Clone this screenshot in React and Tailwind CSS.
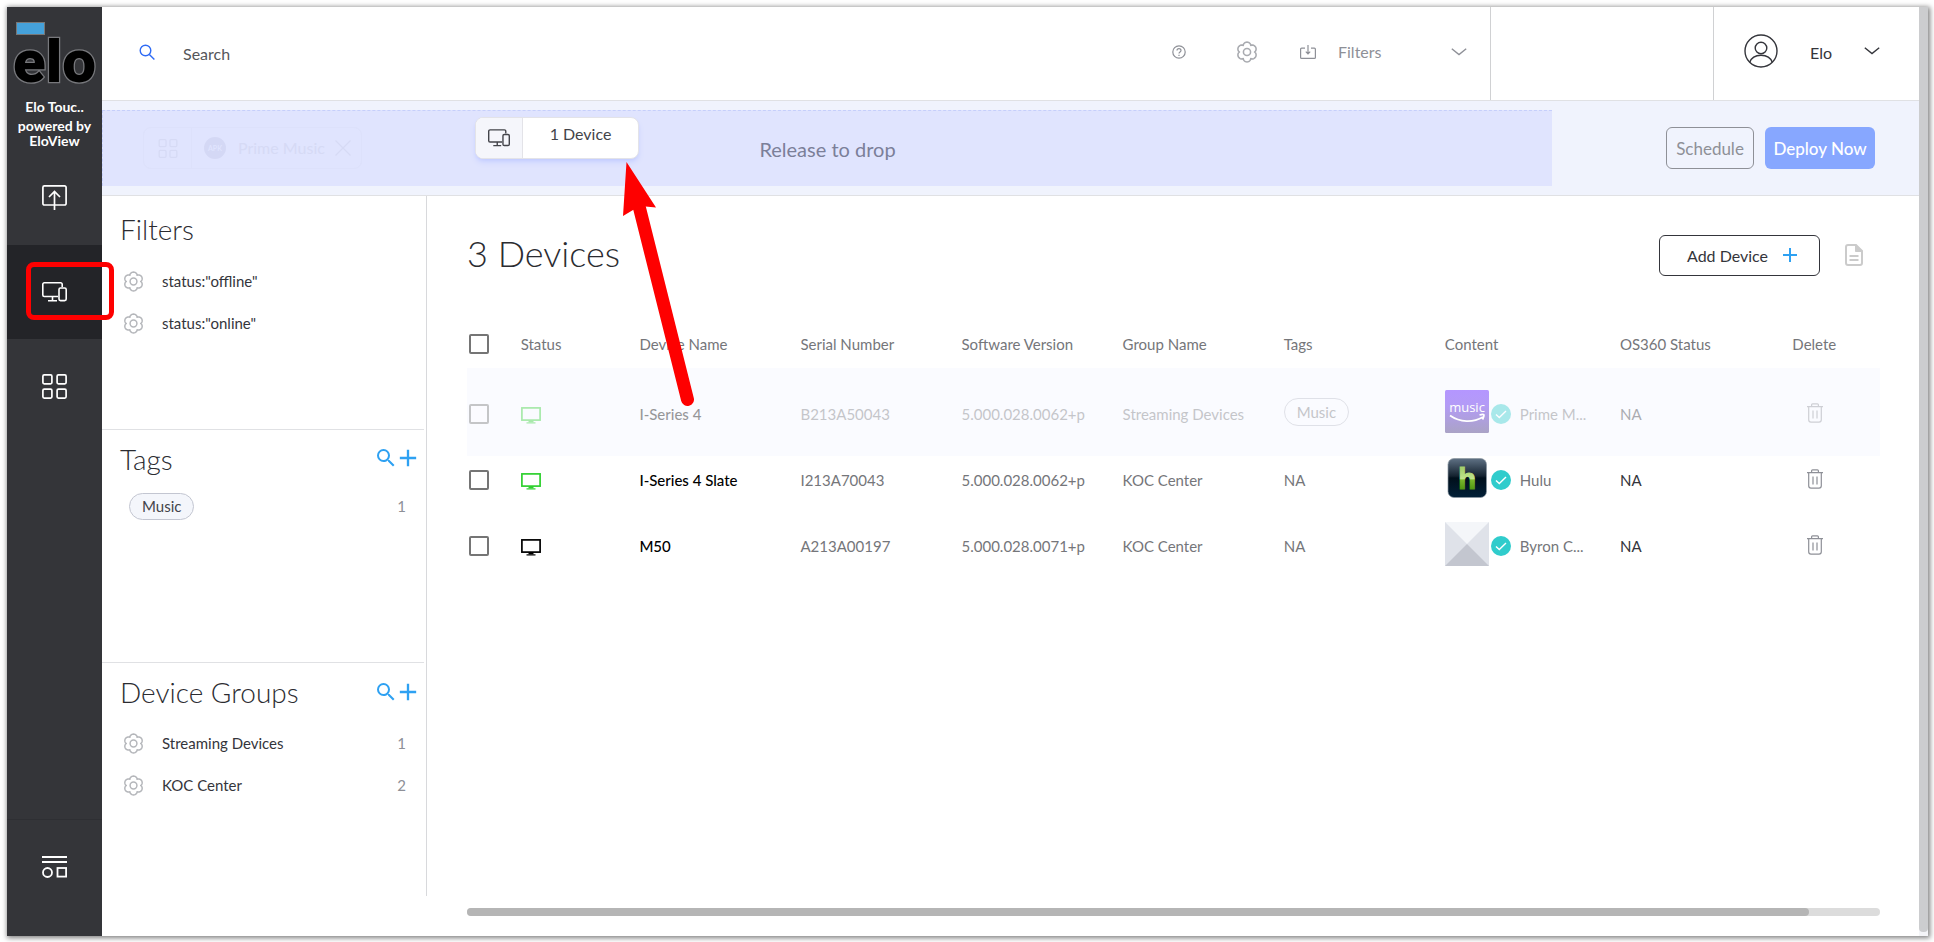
import { MdAdd, MdSearch } from 'react-icons/md'

// six rounded lobes with short notches between, one pointing up
const GEAR = Array.from({ length: 72 }, (_, i) => {
  const t = (i * Math.PI) / 36
  const r = 8.2 + 2.6 * Math.pow(Math.abs(Math.cos(3 * t)), 0.7)
  return `${(12 + r * Math.sin(t)).toFixed(2)},${(12 - r * Math.cos(t)).toFixed(2)}`
}).join(' ')

const DEVICES = [
  { name: 'I-Series 4', serial: 'B213A50043', version: '5.000.028.0062+p', group: 'Streaming Devices', tag: 'Music', app: 'music', content: 'Prime M...', status: 'text-[#2fd02f]', dragging: true },
  { name: 'I-Series 4 Slate', serial: 'I213A70043', version: '5.000.028.0062+p', group: 'KOC Center', app: 'hulu', content: 'Hulu', status: 'text-[#2fd02f]' },
  { name: 'M50', serial: 'A213A00197', version: '5.000.028.0071+p', group: 'KOC Center', app: 'none', content: 'Byron C...', status: 'text-black' },
]

const COLUMNS = ['Status', 'Device Name', 'Serial Number', 'Software Version', 'Group Name', 'Tags', 'Content', 'OS360 Status', 'Delete']

function GearIcon({ className }) {
  return (
    <svg viewBox="0 0 24 24" className={className} fill="none" stroke="currentColor" strokeWidth="1.7">
      <polygon points={GEAR} strokeLinejoin="round" />
      <circle cx="12" cy="12" r="3.9" />
    </svg>
  )
}

function DevicesIcon({ className }) {
  return (
    <svg viewBox="0 0 25 20" className={className} fill="none" stroke="currentColor" strokeWidth="1.6">
      <path d="M16 14.5H2.3A1.5 1.5 0 0 1 .8 13V2.3A1.5 1.5 0 0 1 2.3.8h16.4a1.5 1.5 0 0 1 1.5 1.5V5M10.5 14.5v4M6 18.7h9" />
      <rect x="17" y="6" width="7.2" height="12.6" rx="1.5" />
    </svg>
  )
}

function GridIcon({ className }) {
  return (
    <svg viewBox="0 0 25 25" className={className} fill="none" stroke="currentColor" strokeWidth="1.7">
      <rect x=".9" y=".9" width="9" height="9" rx="1.3" />
      <rect x="15.1" y=".9" width="9" height="9" rx="1.3" />
      <rect x=".9" y="15.1" width="9" height="9" rx="1.3" />
      <rect x="15.1" y="15.1" width="9" height="9" rx="1.3" />
    </svg>
  )
}

function Chevron({ className }) {
  return (
    <svg viewBox="0 0 16 8" className={className} fill="none" stroke="currentColor" strokeWidth="1.4">
      <path d="M.8.8 8 6.6 15.2.8" />
    </svg>
  )
}

function MonitorIcon({ className }) {
  return (
    <svg viewBox="0 0 20 17" className={className} fill="none" stroke="currentColor" strokeWidth="1.7">
      <rect x=".9" y=".9" width="18.2" height="12.2" />
      <path d="M10 13v2.4" strokeWidth="5" />
      <path d="M5.5 15.9h9" strokeWidth="1.2" />
    </svg>
  )
}

function TrashIcon() {
  return (
    <svg viewBox="0 0 16 20" className="h-5 w-4" fill="none" stroke="currentColor" strokeWidth="1.2">
      <path d="M0 3.6h16M4.6 3.4V1.8a1 1 0 0 1 1-1h4.8a1 1 0 0 1 1 1v1.6M1.7 3.8v13a2.3 2.3 0 0 0 2.3 2.3h8a2.3 2.3 0 0 0 2.3-2.3v-13M6 7.5v8M10 7.5v8" />
    </svg>
  )
}

function CheckIcon() {
  return (
    <svg viewBox="0 0 20 20" className="h-5 w-5 shrink-0">
      <circle cx="10" cy="10" r="10" fill="#30cccc" />
      <path d="m5 10.4 3.3 3.2L15 7" fill="none" stroke="#fff" strokeWidth="1.4" />
    </svg>
  )
}

function AppIcon({ app }) {
  if (app === 'music') {
    return (
      <svg viewBox="0 0 44 44" className="h-11 w-11 shrink-0">
        <defs>
          <linearGradient id="music" x1="0" y1="0" x2="0" y2="1">
            <stop offset="0" stopColor="#b496ff" />
            <stop offset=".35" stopColor="#b39bf6" />
            <stop offset="1" stopColor="#aaa3c6" />
          </linearGradient>
        </defs>
        <rect width="44" height="43" rx="1.5" fill="url(#music)" />
        <text x="22" y="22" textAnchor="middle" fill="#fff" fontFamily="Open Sans, sans-serif" fontSize="13">music</text>
        <path d="M5 25.5c10 7 23 7.4 33 1.5M34.5 25c5-1.5 5.5-.5 3 4.5" fill="none" stroke="#fff" strokeWidth="1.8" />
      </svg>
    )
  }
  if (app === 'hulu') {
    return (
      <svg viewBox="0 0 44 44" className="h-11 w-11 shrink-0">
        <defs>
          <linearGradient id="hulu" x1="0" y1="0" x2="0" y2="1">
            <stop offset="0" stopColor="#5f7184" />
            <stop offset=".45" stopColor="#14222f" />
            <stop offset=".5" stopColor="#000f1b" />
            <stop offset="1" stopColor="#022038" />
          </linearGradient>
          <linearGradient id="huluText" x1="0" y1="0" x2="0" y2="1">
            <stop offset=".2" stopColor="#a5cf6d" />
            <stop offset=".5" stopColor="#c0e48b" />
            <stop offset=".55" stopColor="#79b62c" />
            <stop offset=".85" stopColor="#4f9610" />
          </linearGradient>
        </defs>
        <rect x="3" y="2.5" width="38.5" height="39" rx="6" fill="url(#hulu)" stroke="#8b97a1" strokeWidth=".7" />
        <text x="22" y="32.5" textAnchor="middle" fill="url(#huluText)" stroke="url(#huluText)" strokeWidth="1.2" fontFamily="Liberation Sans, sans-serif" fontWeight="700" fontSize="29">h</text>
      </svg>
    )
  }
  return (
    <svg viewBox="0 0 44 44" className="h-11 w-11 shrink-0">
      <rect width="44" height="44" fill="#dfe2e9" />
      <path d="M0 0h44L22 22z" fill="#f4f6f9" />
      <path d="M0 44h44L22 22z" fill="#c3c6cf" />
    </svg>
  )
}

function NavItem({ label, active, children }) {
  return (
    <a href="#" aria-label={label} className={`flex h-[94px] items-center justify-center text-white ${active ? 'bg-[#232428]' : ''}`}>
      {children}
    </a>
  )
}

function Sidebar() {
  return (
    <aside className="flex w-[95px] shrink-0 flex-col bg-[#343539]">
      <svg viewBox="0 0 95 92" className="h-[92px] w-[95px]" role="img" aria-label="Elo logo">
        <rect x="9.5" y="15.5" width="28" height="12" fill="#45a1da" stroke="#777" strokeWidth="1" />
        <text x="47.5" y="75" textAnchor="middle" fontFamily="Roboto, sans-serif" fontWeight="900" fontSize="60" fill="#000" stroke="#77787c" strokeWidth="2.5" paintOrder="stroke">elo</text>
      </svg>
      <div className="flex h-[52px] flex-col items-center gap-1 text-center text-sm leading-[15px] font-bold text-white">
        <span>Elo Touc..</span>
        <span>powered by EloView</span>
      </div>
      <nav>
        <NavItem label="Deploy">
          <svg viewBox="0 0 25 26" className="h-[26px] w-[25px]" fill="none" stroke="currentColor" strokeWidth="1.7">
            <path d="M9 20H2.4A1.5 1.5 0 0 1 .9 18.5V2.4A1.5 1.5 0 0 1 2.4.9h20.2a1.5 1.5 0 0 1 1.5 1.5v16.1a1.5 1.5 0 0 1-1.5 1.5H9M12.5 25V7M7 12l5.5-5.5L18 12" />
          </svg>
        </NavItem>
        <NavItem label="Devices" active>
          <DevicesIcon className="h-5 w-[25px]" />
        </NavItem>
        <NavItem label="Content">
          <GridIcon className="h-[25px] w-[25px]" />
        </NavItem>
      </nav>
      <div className="mt-auto mb-[22px] border-t border-[#2e2f33]">
        <NavItem label="Menu">
          <svg viewBox="0 0 25 22" className="h-[22px] w-[25px]" fill="none" stroke="currentColor" strokeWidth="1.8">
            <path d="M0 1h25M0 6h25" />
            <circle cx="5.5" cy="16.5" r="4.5" />
            <rect x="15.5" y="12" width="8.6" height="8.6" />
          </svg>
        </NavItem>
      </div>
    </aside>
  )
}

function Header() {
  return (
    <header className="flex h-[94px] border-b border-[#e0e1e4]">
      <label className="flex flex-1 items-center gap-7 pb-1 pl-[37px]">
        <svg viewBox="0 0 16 16" className="h-4 w-4 text-[#2f6bf5]" fill="none" stroke="currentColor" strokeWidth="1.4">
          <circle cx="6.5" cy="6.5" r="5.3" />
          <path d="m10.4 10.4 5 5" />
        </svg>
        <input type="text" placeholder="Search" aria-label="Search" className="min-w-0 flex-1 pt-1 text-base outline-none placeholder:text-[#55565a]" />
      </label>
      <div className="flex items-center pb-1 text-[#8e9097]">
        <button type="button" aria-label="Help">
          <svg viewBox="0 0 14 14" className="h-[14px] w-[14px]" fill="none" stroke="currentColor" strokeWidth="1.2">
            <circle cx="7" cy="7" r="6.2" />
            <path d="M5 5.6c0-2.7 4-2.6 4-.2C9 7 7 6.9 7 8.6M7 9.7V11" />
          </svg>
        </button>
        <button type="button" aria-label="Settings" className="ml-[50px] text-[#a9abb0]">
          <GearIcon className="h-[22px] w-[22px]" />
        </button>
        <svg viewBox="0 0 16 14" className="ml-[42px] h-[14px] w-4" fill="none" stroke="currentColor" strokeWidth="1.2">
          <path d="M5 3.2H1.6a1 1 0 0 0-1 1v8.2a1 1 0 0 0 1 1h12.8a1 1 0 0 0 1-1V4.2a1 1 0 0 0-1-1H11M8 0v8.5M5.8 6.7 8 9l2.2-2.3" />
        </svg>
        <div className="relative ml-[22px]">
          <select aria-label="Filters" className="w-[129px] appearance-none text-base outline-none">
            <option>Filters</option>
          </select>
          <Chevron className="pointer-events-none absolute top-1/2 right-0 h-2 w-4 -translate-y-1/2" />
        </div>
      </div>
      <div className="ml-[23px] w-[224px] border-x border-[#d0d1d3]" />
      <button type="button" className="flex w-[205px] items-center pb-[6px] pl-[30px] text-base text-[#34353b]">
        <svg viewBox="0 0 34 34" className="h-[34px] w-[34px]" fill="none" stroke="currentColor" strokeWidth="1.4">
          <circle cx="17" cy="17" r="16" />
          <circle cx="17" cy="14" r="5.8" />
          <path d="M5.8 28.3c3-9.5 19.4-9.5 22.4 0" />
        </svg>
        <span className="ml-8 pt-1">Elo</span>
        <Chevron className="ml-8 h-2 w-4" />
      </button>
    </header>
  )
}

function DeployBar() {
  return (
    <div className="flex h-[95px] items-center border-b border-[#e0e1e4] bg-[#f0f3fd]">
      <div className="relative flex h-[76px] flex-1 items-center justify-center border-t border-l border-dashed border-[#c6cffb] bg-[#e0e4fe]">
        {/* current selection, faded while something is dragged over it */}
        <div className="absolute top-[16px] left-[40px] flex h-[42px] items-center rounded-lg border border-[#dde1fb] text-[#d6daf5]">
          <span className="flex h-full w-12 items-center justify-center border-r border-[#dde1fb]">
            <GridIcon className="h-[19px] w-[22px]" />
          </span>
          <span className="ml-3 flex h-[22px] w-[22px] items-center justify-center rounded-full bg-[#d4d8f5] text-[7px] font-bold text-[#e0e4fe]">APK</span>
          <span className="ml-3 text-base">Prime Music</span>
          <svg viewBox="0 0 16 16" className="mx-[10px] h-4 w-4" fill="none" stroke="currentColor" strokeWidth="1.2">
            <path d="m.5.5 15 15m0-15-15 15" />
          </svg>
        </div>
        <p className="text-xl text-[#7b7f99]">Release to drop</p>
        {/* dragged item */}
        <div className="absolute top-[6px] left-[372px] flex h-[42px] w-[164px] overflow-hidden rounded-lg border border-[#e3e3e8] bg-white text-base text-[#43444a] shadow-md shadow-indigo-300/40">
          <span className="flex w-[47px] items-center justify-center border-r border-[#e3e3e8] bg-[#f5f6fb]">
            <DevicesIcon className="h-[18px] w-[22px]" />
          </span>
          <span className="flex-1 pt-1 text-center">1 Device</span>
        </div>
      </div>
      <div className="flex items-center gap-[11px] pr-[44px] pl-[114px] text-[17px]">
        <button type="button" className="h-[42px] w-[88px] rounded-md border border-[#8e9097] pt-[2px] text-[#8e9097]">Schedule</button>
        <button type="button" className="h-[42px] w-[110px] rounded-md bg-[#87a7ff] pt-[2px] font-medium whitespace-nowrap text-white">Deploy Now</button>
      </div>
    </div>
  )
}

function PanelSection({ title, tools, last, children }) {
  return (
    <section className={`mr-[2px] flex-1 ${last ? '' : 'border-b border-[#e0e1e4]'}`}>
      <div className={`flex items-center justify-between pr-[2px] pl-[18px] ${tools ? 'pt-2' : 'pt-3'}`}>
        <h2 className="text-[28px] leading-[43px] font-light text-[#2b2c31]">{title}</h2>
        {tools && (
          <div className="flex items-center pb-[2px] text-[#2ea1f2]">
            <button type="button" aria-label={`Search ${title}`}><MdSearch className="h-6 w-6" /></button>
            <button type="button" aria-label={`Add ${title}`} className="-ml-1"><MdAdd className="h-7 w-7" /></button>
          </div>
        )}
      </div>
      {children}
    </section>
  )
}

function PanelRow({ label, count }) {
  return (
    <li className="flex h-[42px] items-center pr-[18px] pl-[21px] text-[15px]">
      <GearIcon className="h-[21px] w-[21px] text-[#b5b7bb]" />
      <a href="#" className="ml-[18px] flex-1 text-[#34353b]">{label}</a>
      <span className="text-[#8e9097]">{count}</span>
    </li>
  )
}

function FilterPanel() {
  return (
    <div className="mb-10 flex w-[325px] shrink-0 flex-col border-r border-[#d8d9dc]">
      <PanelSection title="Filters">
        <ul className="pt-[9px]">
          <PanelRow label={'status:"offline"'} />
          <PanelRow label={'status:"online"'} />
        </ul>
      </PanelSection>
      <PanelSection title="Tags" tools>
        <div className="flex items-center justify-between pt-3 pr-[18px] pl-[27px] text-[15px]">
          <span className="rounded-full border border-[#c3c6d1] bg-[#f4f6fb] px-3 leading-[25px] text-[#43444a]">Music</span>
          <span className="text-[#8e9097]">1</span>
        </div>
      </PanelSection>
      <PanelSection title="Device Groups" tools last>
        <ul className="pt-2">
          <PanelRow label="Streaming Devices" count={1} />
          <PanelRow label="KOC Center" count={2} />
        </ul>
      </PanelSection>
    </div>
  )
}

function Checkbox({ label }) {
  return <input type="checkbox" aria-label={label} className="ml-[2px] block h-5 w-5 appearance-none rounded-[2px] border-2 border-[#757575] bg-white/50" />
}

function Cell({ faded, className = '', children }) {
  return (
    <td className={`p-0 pb-4 ${faded ? 'pt-[22px]' : ''}`}>
      <div className={`flex h-[50px] items-center whitespace-nowrap ${faded ? 'opacity-40' : ''} ${className}`}>{children}</div>
    </td>
  )
}

function DeviceRow({ device }) {
  const faded = device.dragging
  return (
    <tr className={faded ? 'bg-[#fafbff]' : ''}>
      <Cell faded={faded} className="pb-[2px]"><Checkbox label={`Select ${device.name}`} /></Cell>
      <Cell faded={faded}><MonitorIcon className={`mt-[2px] h-[17px] w-5 ${device.status}`} /></Cell>
      <Cell faded={faded} className="font-medium text-black">{device.name}</Cell>
      <Cell faded={faded}>{device.serial}</Cell>
      <Cell faded={faded}>{device.version}</Cell>
      <Cell faded={faded}>{device.group}</Cell>
      <Cell faded={faded}>
        {device.tag ? <span className="mb-[6px] rounded-full border border-[#b9bcc6] px-3 leading-[26px]">{device.tag}</span> : 'NA'}
      </Cell>
      <td className={`p-0 pb-[22px] ${faded ? 'pt-[22px]' : ''}`}>
        <div className="flex h-11 items-center whitespace-nowrap">
          <AppIcon app={device.app} />
          <div className={`ml-[2px] flex items-center gap-[9px] pt-[5px] ${faded ? 'opacity-40' : ''}`}>
            <CheckIcon />
            {device.content}
          </div>
        </div>
      </td>
      <Cell faded={faded} className="text-[#34353b]">NA</Cell>
      <Cell faded={faded} className="pb-[3px] pl-[15px] text-[#8e9097]">
        <button type="button" aria-label={`Delete ${device.name}`}><TrashIcon /></button>
      </Cell>
    </tr>
  )
}

function DeviceList() {
  return (
    <main className="flex min-w-0 flex-1 flex-col pr-[39px] pb-5 pl-10">
      <div className="flex items-center pt-[35px]">
        <h1 className="flex-1 pb-1 text-[36px] leading-[44px] font-light text-[#2b2c31]">3 Devices</h1>
        <button type="button" className="flex h-[41px] w-[161px] items-center justify-between rounded-md border border-[#34353b] pr-[17px] pl-[27px] text-base text-[#34353b]">
          <span className="pt-[2px]">Add Device</span>
          <MdAdd className="h-6 w-6 text-[#2ea1f2]" />
        </button>
        <button type="button" aria-label="Export report" className="mr-[17px] ml-[25px]">
          <svg viewBox="0 0 18 22" className="h-[22px] w-[18px]" fill="none" stroke="#cbcbcb" strokeWidth="2">
            <path d="M11 1H3a2 2 0 0 0-2 2v16a2 2 0 0 0 2 2h12a2 2 0 0 0 2-2V7z" />
            <path d="M10.5 1v6.5H17z" fill="#cbcbcb" strokeWidth="1" />
            <path d="M4.5 12h9M4.5 16h9" />
          </svg>
        </button>
      </div>
      <table className="mt-[54px] w-full table-fixed text-left text-[15px] text-[#75767a]">
        <colgroup>
          <col className="w-[3.8%]" />
          <col className="w-[8.4%]" />
          <col className="w-[11.4%]" />
          <col className="w-[11.4%]" />
          <col className="w-[11.4%]" />
          <col className="w-[11.4%]" />
          <col className="w-[11.4%]" />
          <col className="w-[12.4%]" />
          <col className="w-[12.2%]" />
          <col className="w-[6.2%]" />
        </colgroup>
        <thead>
          <tr>
            <th className="p-0 pb-3"><Checkbox label="Select all" /></th>
            {COLUMNS.map(c => <th key={c} className="p-0 pb-3 font-normal whitespace-nowrap">{c}</th>)}
          </tr>
        </thead>
        <tbody>
          {DEVICES.map(d => <DeviceRow key={d.serial} device={d} />)}
        </tbody>
      </table>
      <div className="mt-auto h-2 rounded-full bg-[#dcdcdc]">
        <div className="h-2 w-[95%] rounded-full bg-[#b5b5b5]" />
      </div>
    </main>
  )
}

export default function App() {
  return (
    <div className="relative flex min-h-screen bg-white p-[7px] pr-[6px] pb-[6px] font-['Lato',sans-serif]">
      <div className="flex flex-1 shadow-[1px_1px_5px_1px_rgba(0,0,0,0.5)]">
        <Sidebar />
        <div className="flex min-w-0 flex-1 flex-col bg-white">
          <Header />
          <DeployBar />
          <div className="flex flex-1">
            <FilterPanel />
            <DeviceList />
          </div>
        </div>
        <div className="w-[9px] bg-[#f4f5f8] pb-1">
          <div className="h-full rounded-b bg-[#cccdcf]" />
        </div>
      </div>

      {/* tutorial annotations */}
      <div className="pointer-events-none absolute top-[262px] left-[26px] h-[58px] w-[88px] rounded-lg border-[5px] border-[#fe0000]" />
      <svg viewBox="0 0 76 248" className="pointer-events-none absolute top-[160px] left-[620px] h-[248px] w-[76px]" fill="#fe0000">
        <path d="M6.5 2 36 47.5 25.5 46.5 13 50 3 56z" />
        <path d="M19 46 67.5 239.5" stroke="#fe0000" strokeWidth="13" strokeLinecap="round" />
      </svg>
    </div>
  )
}
